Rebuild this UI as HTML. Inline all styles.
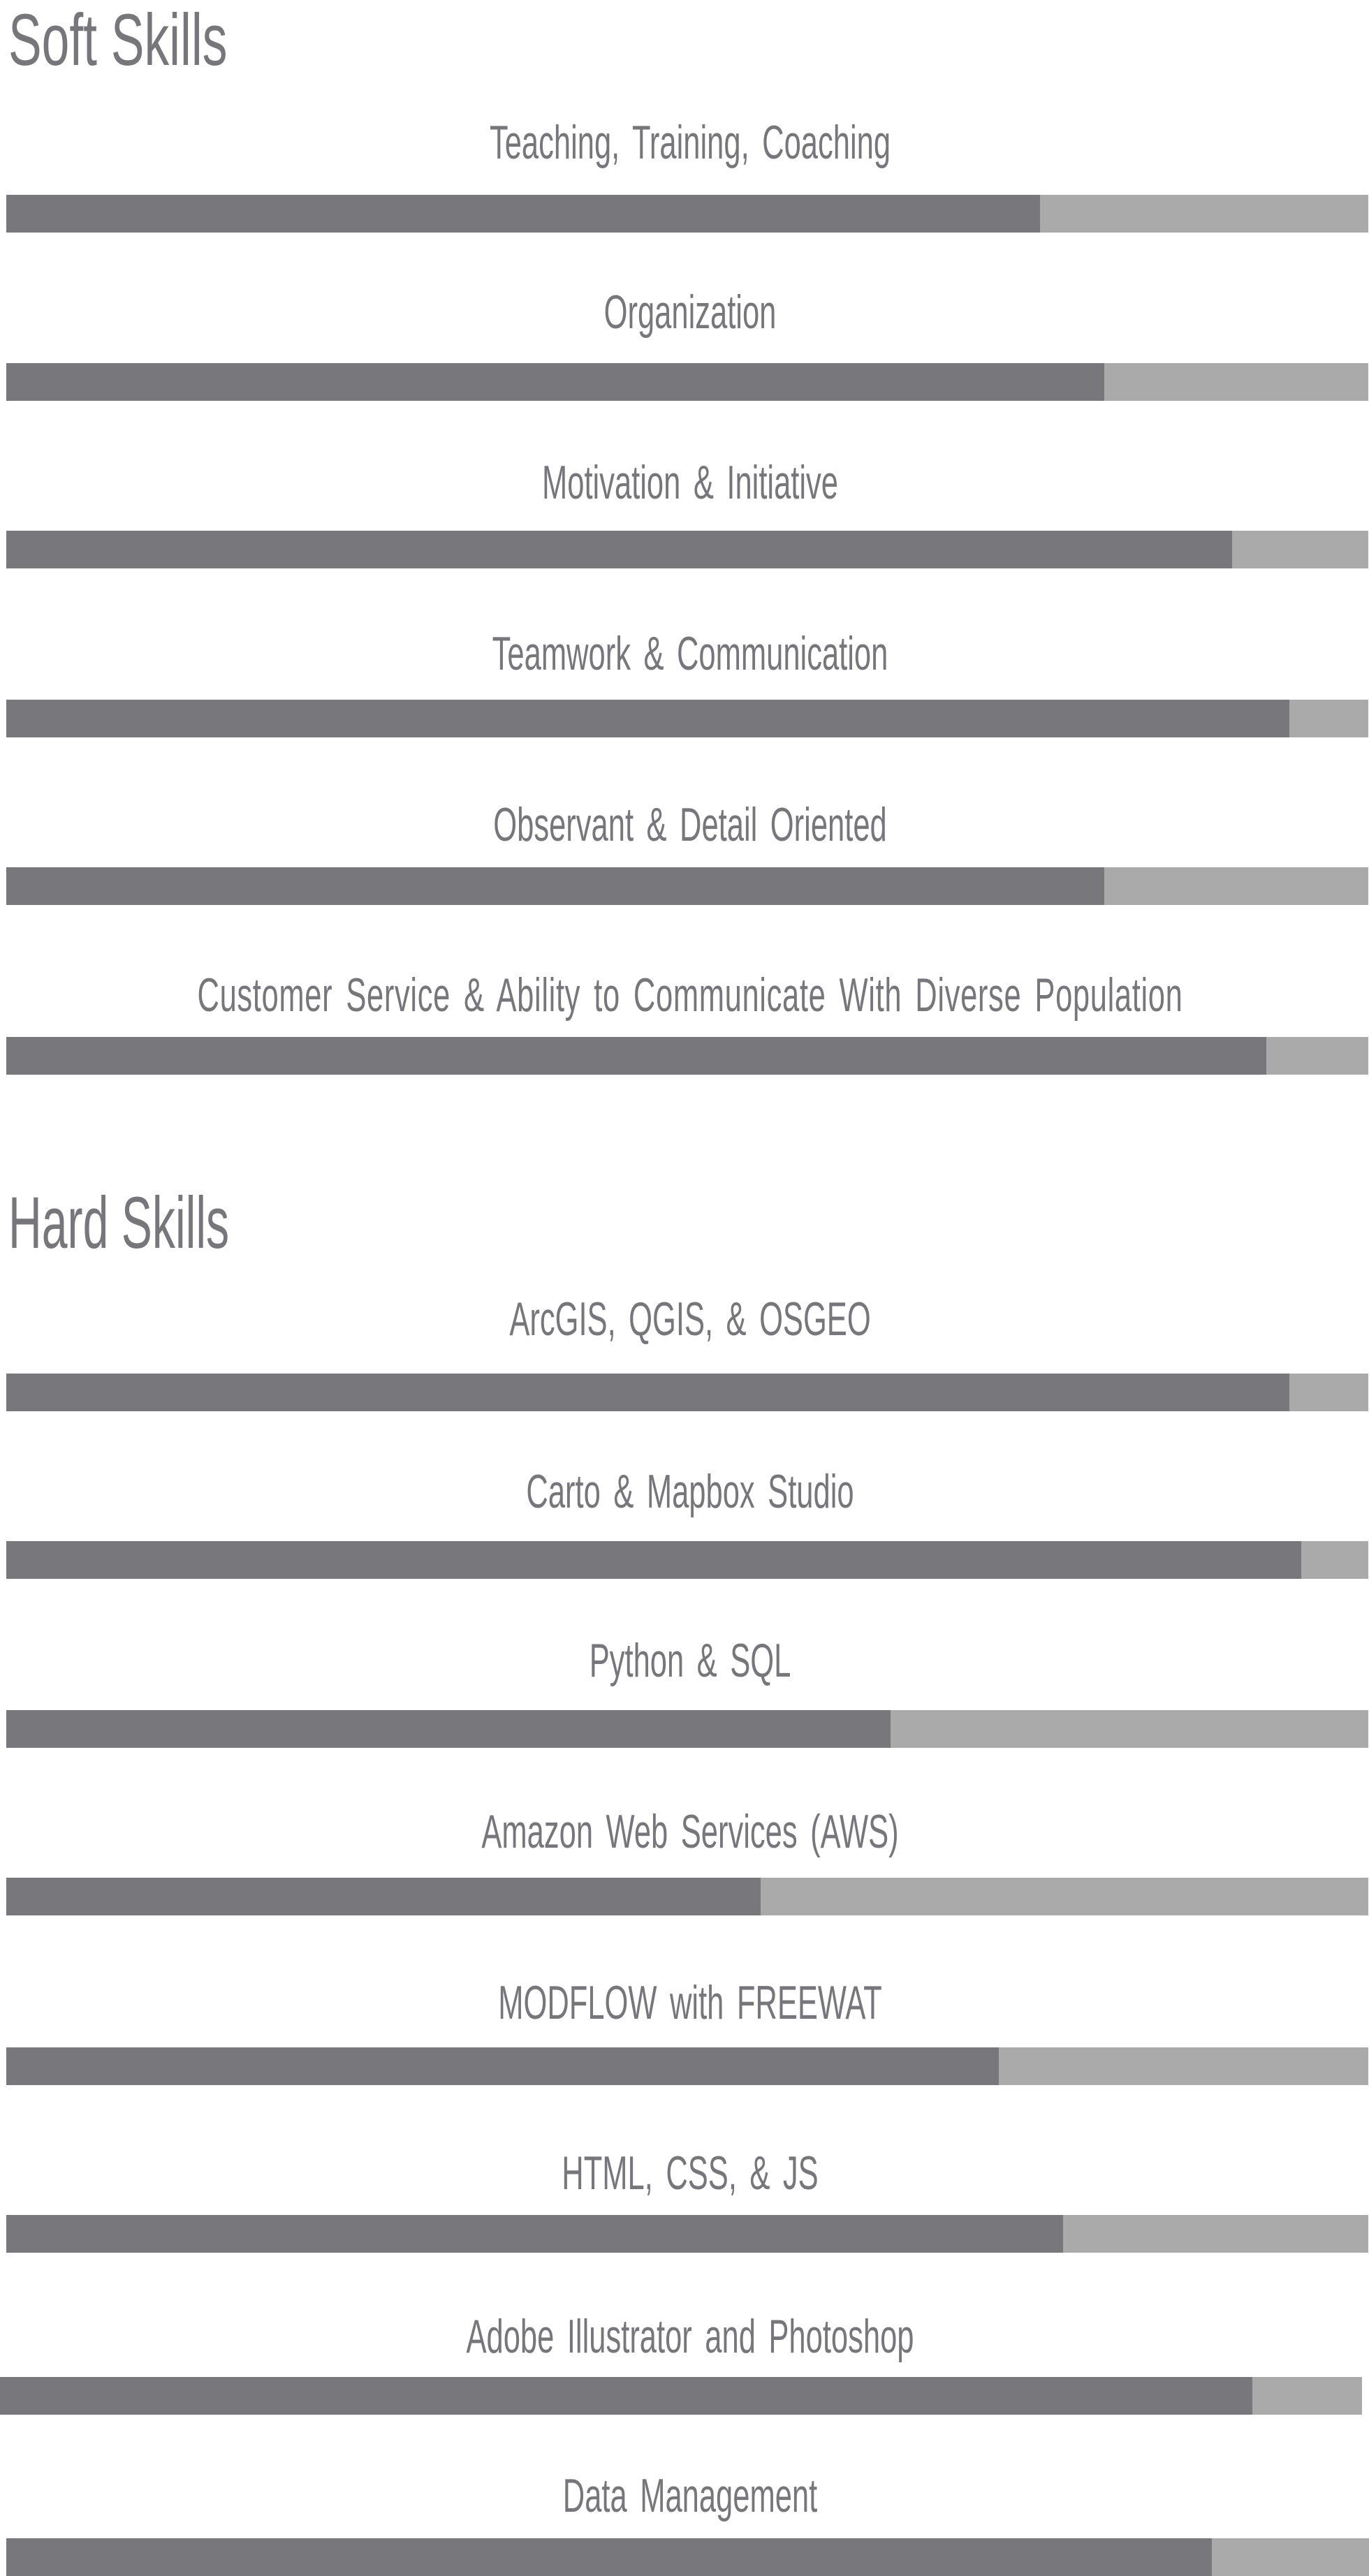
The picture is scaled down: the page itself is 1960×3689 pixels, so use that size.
<!DOCTYPE html>
<html><head><meta charset="utf-8"><style>
html,body{margin:0;padding:0;background:#fff;}
body{width:1960px;height:3689px;position:relative;overflow:hidden;font-family:"Liberation Sans",sans-serif;color:#77777b;}
.h{position:absolute;left:12px;font-size:105px;line-height:105px;white-space:nowrap;transform:scaleX(0.68);transform-origin:left top;}
.l{position:absolute;left:988px;font-size:68px;line-height:68px;white-space:nowrap;transform:translateX(-50%) scaleX(0.64);word-spacing:10px;}
.bar{position:absolute;left:9px;width:1950px;height:54px;background:#aaaaab;}
.bar i{display:block;height:100%;background:#78787c;}
</style></head><body>
<div class="h" style="top:5px">Soft Skills</div>
<div class="l" style="top:170px">Teaching, Training, Coaching</div>
<div class="bar" style="top:279px"><i style="width:1480px"></i></div>
<div class="l" style="top:413px">Organization</div>
<div class="bar" style="top:520px"><i style="width:1572px"></i></div>
<div class="l" style="top:657px">Motivation &amp; Initiative</div>
<div class="bar" style="top:760px"><i style="width:1755px"></i></div>
<div class="l" style="top:902px">Teamwork &amp; Communication</div>
<div class="bar" style="top:1002px"><i style="width:1837px"></i></div>
<div class="l" style="top:1147px">Observant &amp; Detail Oriented</div>
<div class="bar" style="top:1242px"><i style="width:1572px"></i></div>
<div class="l" style="top:1391px;letter-spacing:1px">Customer Service &amp; Ability to Communicate With Diverse Population</div>
<div class="bar" style="top:1485px"><i style="width:1804px"></i></div>

<div class="h" style="top:1699px;transform:scaleX(0.63)">Hard Skills</div>
<div class="l" style="top:1855px">ArcGIS, QGIS, &amp; OSGEO</div>
<div class="bar" style="top:1967px"><i style="width:1837px"></i></div>
<div class="l" style="top:2102px">Carto &amp; Mapbox Studio</div>
<div class="bar" style="top:2207px"><i style="width:1854px"></i></div>
<div class="l" style="top:2344px">Python &amp; SQL</div>
<div class="bar" style="top:2449px"><i style="width:1266px"></i></div>
<div class="l" style="top:2589px">Amazon Web Services (AWS)</div>
<div class="bar" style="top:2689px"><i style="width:1080px"></i></div>
<div class="l" style="top:2834px">MODFLOW with FREEWAT</div>
<div class="bar" style="top:2932px"><i style="width:1421px"></i></div>
<div class="l" style="top:3078px">HTML, CSS, &amp; JS</div>
<div class="bar" style="top:3172px"><i style="width:1513px"></i></div>
<div class="l" style="top:3312px">Adobe Illustrator and Photoshop</div>
<div class="bar" style="top:3404px;left:0;width:1950px"><i style="width:1793px"></i></div>
<div class="l" style="top:3540px">Data Management</div>
<div class="bar" style="top:3635px;width:1951px"><i style="width:1726px"></i></div>
</body></html>
